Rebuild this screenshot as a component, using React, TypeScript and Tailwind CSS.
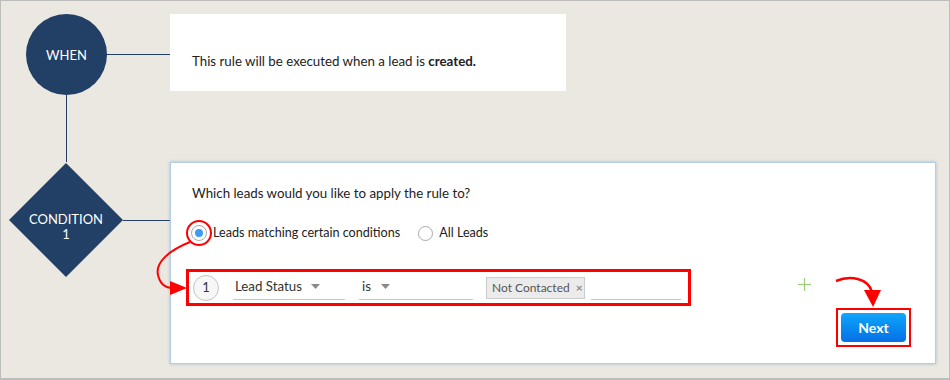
import React from "react";

const NAVY = "#223f66";

function Radio({ checked, size = 16 }: { checked?: boolean; size?: number }) {
  return (
    <span
      className="flex items-center justify-center rounded-full border border-[#a9a9a9] bg-white"
      style={{ width: size, height: size }}
    >
      {checked && <span className="h-[8px] w-[8px] rounded-full bg-[#3c9cf0]" />}
    </span>
  );
}

function Caret() {
  return (
    <svg width="9" height="6" viewBox="0 0 9 6" className="shrink-0">
      <polygon points="0,0 9,0 4.5,5" fill="#8a8a8a" />
    </svg>
  );
}

export default function App() {
  return (
    <div
      className="relative box-border h-[380px] w-[950px] border border-b-2 border-[#bdbdbd] bg-[#ebe8e1] text-[#222]"
      style={{ fontFamily: "Lato, 'Open Sans', sans-serif" }}
    >
      <div className="flex flex-col pt-[13px]">
        {/* Row 1: WHEN */}
        <div className="flex items-start">
          <div className="flex h-[81px] w-[169px] items-center">
            <div
              className="ml-[25px] flex h-[81px] w-[81px] shrink-0 items-center justify-center rounded-full pt-[2px] text-[13px] text-white"
              style={{ backgroundColor: NAVY }}
            >
              WHEN
            </div>
            <div className="h-px flex-1" style={{ backgroundColor: NAVY }} />
          </div>
          <div className="h-[77px] w-[396px] bg-white pl-[22px] pt-[38px] text-[13.3px] leading-[18px] text-[#222]">
            This rule will be executed when a lead is <span className="font-bold">created.</span>
          </div>
        </div>

        {/* vertical connector */}
        <div className="ml-[65px] h-[67px] w-px" style={{ backgroundColor: NAVY }} />

        {/* Row 2: CONDITION */}
        <div className="flex items-start">
          <div className="mt-px flex h-[114px] w-[169px] items-center">
            <div className="relative ml-[8px] flex h-[114px] w-[114px] shrink-0 items-center justify-center">
              <svg className="absolute inset-0" width="114" height="114" viewBox="0 0 114 114">
                <polygon points="57,0 114,57 57,114 0,57" fill={NAVY} />
              </svg>
              <span className="relative mt-[14px] flex flex-col items-center text-[13px] leading-[15px] text-white">
                <span>CONDITION</span>
                <span>1</span>
              </span>
            </div>
            <div className="h-px flex-1" style={{ backgroundColor: NAVY }} />
          </div>

          <div className="box-border h-[202px] w-[766px] border border-[#b3cde2] bg-white px-[15px] pt-[21px] shadow-[0_0_3px_rgba(120,160,200,0.6)]">
            <div className="ml-[6px] text-[13.3px] leading-[18px] text-[#222]">
              Which leads would you like to apply the rule to?
            </div>

            <div className="mt-[18px] flex items-center text-[12.6px] text-[#222]">
              <span className="flex h-[26px] w-[26px] items-center justify-center rounded-full border-2 border-[#ff0000]">
                <Radio checked />
              </span>
              <span className="ml-[1px]">Leads matching certain conditions</span>
              <span className="ml-[18px]">
                <Radio size={15} />
              </span>
              <span className="ml-[6px]">All Leads</span>
            </div>

            <div className="mt-[23px] flex items-start">
              <div className="box-border flex h-[37px] w-[505px] items-center border-[3px] border-[#ff0000] pl-[4px] text-[13.3px]">
                <span className="flex h-[26px] w-[26px] shrink-0 items-center justify-center rounded-full border border-[#c4c4c4] bg-[#f7f7f7] text-[13px] text-[#333]">
                  1
                </span>
                <div className="ml-[14px] flex h-[24px] w-[112px] shrink-0 items-center gap-[9px] border-b border-[#c8c8c8] pl-[2px]">
                  <span className="whitespace-nowrap text-[#333]">Lead Status</span>
                  <Caret />
                </div>
                <div className="ml-[14px] flex h-[24px] w-[114px] shrink-0 items-center gap-[10px] border-b border-[#c8c8c8] pl-[3px]">
                  <span className="text-[#333]">is</span>
                  <Caret />
                </div>
                <div className="ml-[13px] flex h-[22px] w-[99px] shrink-0 items-center whitespace-nowrap border border-[#cccccc] bg-[#ebebeb] pl-[5px] text-[12px] text-[#555]">
                  Not Contacted
                  <span className="ml-[6px] text-[12px] font-bold text-[#8a8a8a]">×</span>
                </div>
                <div className="ml-[6px] h-[24px] w-[90px] shrink-0 border-b border-[#c8c8c8]" />
              </div>
              <svg className="ml-[107px] mt-[9px]" width="13" height="13" viewBox="0 0 13 13">
                <line x1="6.5" y1="0" x2="6.5" y2="13" stroke="#9dcb7a" strokeWidth="1.2" />
                <line x1="0" y1="6.5" x2="13" y2="6.5" stroke="#9dcb7a" strokeWidth="1.2" />
              </svg>
            </div>

            <div className="mt-[2px] flex justify-end pr-[9px]">
              <div className="box-border flex h-[39px] w-[75px] items-center justify-center border-2 border-[#ff0000]">
                <button className="h-[29px] w-[65px] rounded-[4px] bg-gradient-to-b from-[#12a6fb] to-[#0a6fe6] text-[14px] font-bold text-white">
                  Next
                </button>
              </div>
            </div>
          </div>
        </div>
      </div>

      {/* annotation arrows */}
      <svg className="pointer-events-none absolute left-[-1px] top-[-1px]" width="950" height="380" viewBox="0 0 950 380">
        <path d="M 190 242 C 170 250, 155 262, 158 275 C 160 284, 166 288, 173 288" fill="none" stroke="#ff0000" strokeWidth="2" />
        <polygon points="170,281 187,288 170,295" fill="#ff0000" />
        <path d="M 836 281 C 850 275, 868 278, 872 292" fill="none" stroke="#ff0000" strokeWidth="2.5" />
        <polygon points="864,290 881,290 873,307" fill="#ff0000" />
      </svg>
    </div>
  );
}
